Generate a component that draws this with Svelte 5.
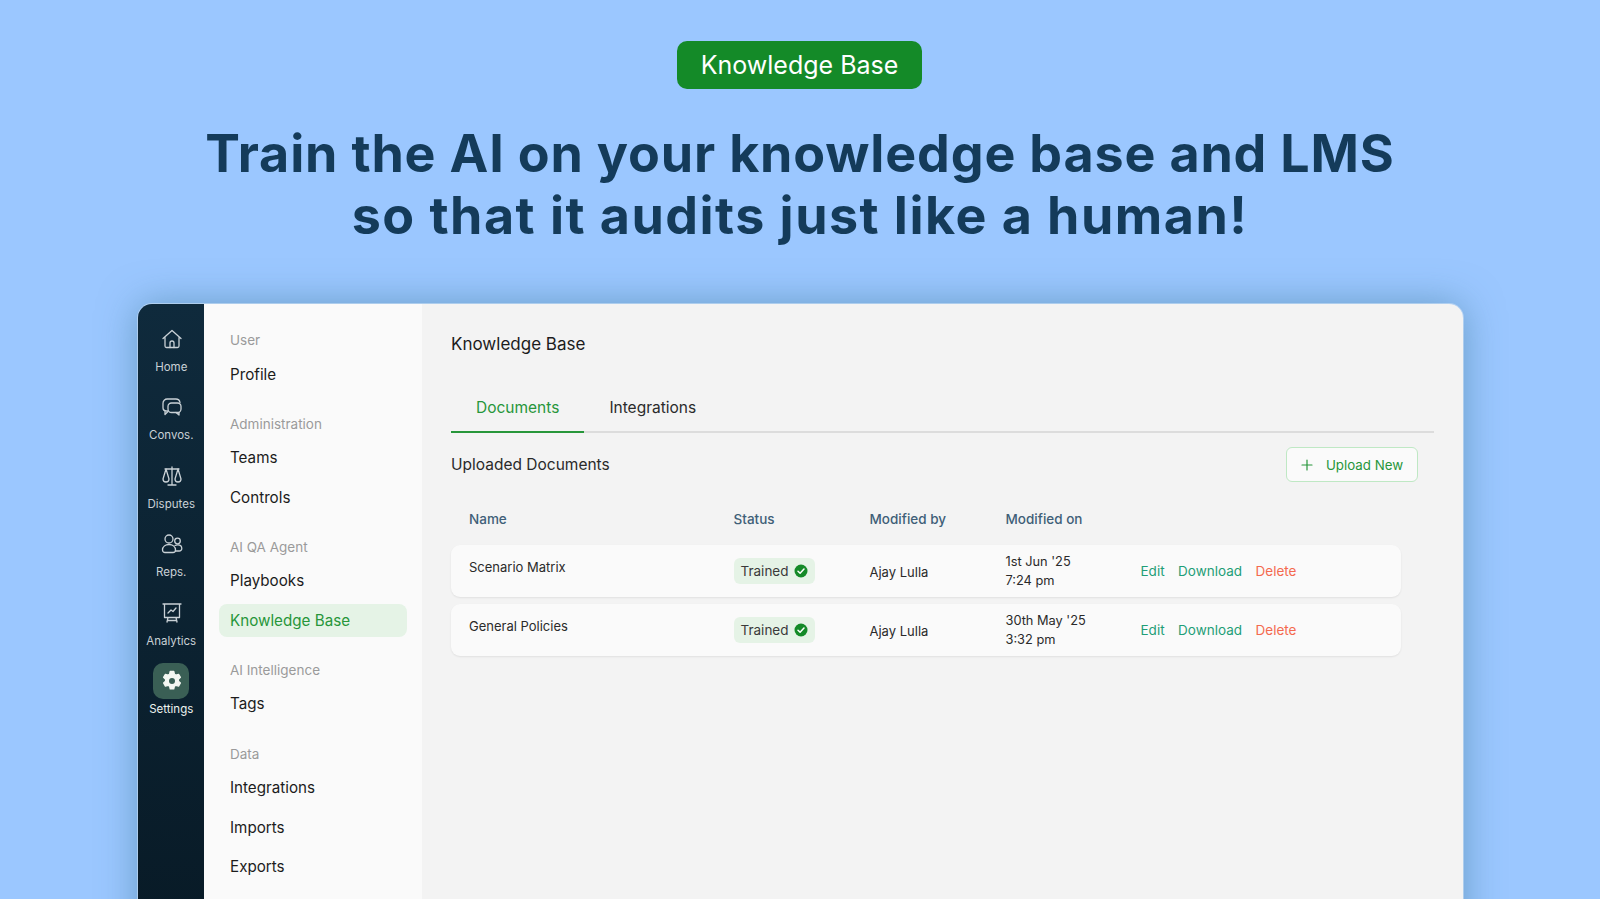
<script>
  const rail = [
    { id: 'home', label: 'Home' },
    { id: 'convos', label: 'Convos.' },
    { id: 'disputes', label: 'Disputes' },
    { id: 'reps', label: 'Reps.' },
    { id: 'analytics', label: 'Analytics' },
    { id: 'settings', label: 'Settings', active: true }
  ];
  const groups = [
    { title: 'User', items: ['Profile'] },
    { title: 'Administration', items: ['Teams', 'Controls'] },
    { title: 'AI QA Agent', items: ['Playbooks', 'Knowledge Base'] },
    { title: 'AI Intelligence', items: ['Tags'] },
    { title: 'Data', items: ['Integrations', 'Imports', 'Exports'] }
  ];
  const docs = [
    { name: 'Scenario Matrix', by: 'Ajay Lulla', date: "1st Jun '25", time: '7:24 pm' },
    { name: 'General Policies', by: 'Ajay Lulla', date: "30th May '25", time: '3:32 pm' }
  ];
</script>

<div class="page">
  <div class="badge">Knowledge Base</div>
  <h1><span class="l1">Train the AI on your knowledge base and LMS</span><span class="l2">so that it audits just like a human!</span></h1>

  <div class="window">
    <nav class="rail">
      {#each rail as r}
        <div class="rail-item" class:active={r.active}>
          <div class="tile">
            <svg viewBox="0 0 24 24" fill="none" stroke="currentColor" stroke-width="1.300" stroke-linecap="round" stroke-linejoin="round">
              {#if r.id === 'home'}
                <path d="M3 11.500 12 3.500l9 8M5 10v9a1.500 1.500 0 0 0 1.500 1.500h11A1.500 1.500 0 0 0 19 19v-9" />
                <path d="M10 20.500V16a2 2 0 0 1 4 0v4.500" />
              {:else if r.id === 'convos'}
                <path d="M7.500 16H6.200A3.200 3.200 0 0 1 3 12.800V8.200A4.200 4.200 0 0 1 7.200 4h8.600A4.200 4.200 0 0 1 20 7.500" />
                <path d="M8 11.500A3.500 3.500 0 0 1 11.500 8H17.500A3.500 3.500 0 0 1 21 11.500V14A3.500 3.500 0 0 1 17.500 17.500H11.500A3.500 3.500 0 0 1 8 14Z" />
                <path d="M5 16v3.500l3-3M19 17.500v2.500l-3-2.500" />
              {:else if r.id === 'disputes'}
                <path d="M12 3v18M8 21h8M5 5h14" />
                <path d="M6 5 3 15a3 3 0 0 0 6 0ZM18 5l-3 10a3 3 0 0 0 6 0Z" />
              {:else if r.id === 'reps'}
                <circle cx="9" cy="7" r="4" />
                <circle cx="17.500" cy="9" r="2.800" />
                <path d="M2.500 18c0-3.500 3-5.500 6.500-5.500s6.500 2 6.500 5.500a2.500 2.500 0 0 1-2.500 2.500H5A2.500 2.500 0 0 1 2.500 18Z" />
                <path d="M15 13.500c1-.5 1.800-.7 2.800-.7 2.200 0 4 1.400 4 3.700a2.500 2.500 0 0 1-2.500 2.500h-3.800" />
              {:else if r.id === 'analytics'}
                <path d="M3 3h18M4.500 3v13.500h15V3M8 16.500 7 21M16 16.500l1 4.500M7.500 19.500h9" />
                <path d="m8 12 3-3 2 1.500 3-3.500" />
              {:else}
                <path class="gear" d="M10.200 2.500h3.600l.6 2.700 1.600.9 2.600-.8 1.800 3.100-2 1.900v1.800l2 1.900-1.800 3.100-2.600-.8-1.600.9-.6 2.700h-3.600l-.6-2.700-1.600-.9-2.600.8-1.800-3.100 2-1.900v-1.800l-2-1.900 1.800-3.100 2.600.8 1.600-.9Z" />
                <circle class="hole" cx="12" cy="12" r="3" />
              {/if}
            </svg>
          </div>
          <span>{r.label}</span>
        </div>
      {/each}
    </nav>

    <aside class="subnav">
      {#each groups as g}
        <section>
          <h4>{g.title}</h4>
          {#each g.items as item}
            <div class="link" class:current={item === 'Knowledge Base'}>{item}</div>
          {/each}
        </section>
      {/each}
    </aside>

    <main>
      <h2>Knowledge Base</h2>
      <div class="tabs">
        <div class="tab on">Documents</div>
        <div class="tab">Integrations</div>
      </div>
      <div class="bar">
        <h3>Uploaded Documents</h3>
        <button>
          <svg viewBox="0 0 14 14" width="14" height="14" fill="none" stroke="currentColor" stroke-width="1.200" stroke-linecap="round"><path d="M7 2v10M2 7h10" /></svg>
          Upload New
        </button>
      </div>
      <div class="grid head">
        <div>Name</div><div>Status</div><div>Modified by</div><div>Modified on</div>
      </div>
      {#each docs as d}
        <div class="grid row">
          <div class="name">{d.name}</div>
          <div>
            <span class="pill">Trained
              <svg viewBox="0 0 14 14" width="14" height="14"><circle cx="7" cy="7" r="6.500" fill="#148a28" /><path d="M4 7.200 6.100 9.200 10 5" fill="none" stroke="#fff" stroke-width="1.500" stroke-linecap="round" stroke-linejoin="round" /></svg>
            </span>
          </div>
          <div class="by">{d.by}</div>
          <div class="date">{d.date}<br />{d.time}</div>
          <div class="actions"><span class="g">Edit</span><span class="g">Download</span><span class="r">Delete</span></div>
        </div>
      {/each}
    </main>
  </div>
</div>

<style>
  :global(body) { margin: 0; background: #9bc7ff; }
  .page {
    height: 899px;
    overflow: hidden;
    padding-top: 41px;
    box-sizing: border-box;
    display: flex;
    flex-direction: column;
    align-items: center;
    font-family: Inter, "Noto Sans", sans-serif;
  }
  .badge {
    width: 245px;
    height: 48px;
    margin-right: 1px;
    background: #148a28;
    color: #fff;
    border-radius: 10px;
    font-size: 25px;
    line-height: 48px;
    text-align: center;
  }
  h1 {
    margin: 34px 0 0;
    font-size: 52px;
    line-height: 62px;
    font-weight: 700;
    color: #143b5a;
    text-align: center;
  }
  h1 span { display: block; }
  .l1 { letter-spacing: .83px; }
  .l2 { letter-spacing: 1.47px; }
  .window {
    margin-top: 57px;
    width: 1325px;
    height: 640px;
    flex: none;
    display: flex;
    border-radius: 14px 14px 0 0;
    overflow: hidden;
    box-shadow: 0 0 0 1px rgba(255, 255, 255, .35), 0 0 38px rgba(60, 120, 150, .55);
  }
  .rail {
    width: 66.500px;
    flex: none;
    background: linear-gradient(#0f2a3c, #081a26);
    padding: 17px 0 0 1px;
    box-sizing: border-box;
  }
  .rail-item {
    height: 68.400px;
    display: flex;
    flex-direction: column;
    align-items: center;
    color: #c9d1d6;
    font-size: 11.500px;
  }
  .rail-item .tile {
    width: 36px;
    height: 36px;
    display: flex;
    align-items: center;
    justify-content: center;
    border-radius: 10px;
  }
  .rail-item svg { width: 24px; height: 24px; margin-left: 1px; }
  .rail-item span { margin-top: 2px; line-height: 16px; }
  .rail-item.active { color: #eef3ef; }
  .rail-item.active .tile { background: #3a5f55; }
  .gear { fill: #f4f7f2; stroke: #f4f7f2; }
  .hole { fill: #3a5f55; stroke: none; }

  .subnav {
    width: 218px;
    flex: none;
    background: #fafafa;
    padding: 27px 15px 0;
    box-sizing: border-box;
  }
  .subnav section { margin-bottom: 24.300px; }
  .subnav h4 {
    margin: 0 0 8.500px;
    padding-left: 11px;
    font-size: 13.500px;
    line-height: 18px;
    font-weight: 400;
    color: #9a9a9a;
  }
  .link {
    padding-left: 11px;
    height: 33px;
    margin-bottom: 6.300px;
    font-size: 15.200px;
    line-height: 33px;
    color: #1c1c1c;
  }
  .link.current {
    background: #e5f3e6;
    color: #27963a;
    border-radius: 8px;
  }

  main {
    flex: 1;
    background: #f3f3f3;
    padding: 29px 29px 0 29px;
    min-width: 0;
  }
  h2 {
    margin: 0;
    font-size: 17px;
    line-height: 22px;
    font-weight: 400;
    color: #1c1c1c;
  }
  .tabs {
    display: flex;
    margin-top: 34px;
    border-bottom: 2px solid #dcdcdc;
  }
  .tab {
    padding: 0 25px;
    height: 44px;
    margin-bottom: -2px;
    font-size: 15.500px;
    line-height: 38px;
    color: #2a2a2a;
  }
  .tab.on {
    color: #27963a;
    border-bottom: 2px solid #27963a;
    height: 42px;
  }
  .bar {
    display: flex;
    justify-content: space-between;
    align-items: center;
    height: 35px;
    margin-top: 14px;
    padding-right: 16px;
  }
  h3 {
    margin: 0;
    font-size: 15.500px;
    font-weight: 400;
    color: #2a2a2a;
  }
  button {
    width: 132px;
    height: 35px;
    display: flex;
    align-items: center;
    justify-content: center;
    gap: 12px;
    background: #fafafa;
    border: 1.500px solid #bfe8c4;
    border-radius: 6px;
    color: #27963a;
    font: 400 13.300px Inter, sans-serif;
  }
  .grid {
    display: grid;
    grid-template-columns: 264.500px 136px 136px 135px 1fr;
    padding-left: 18px;
    width: 950px;
    box-sizing: border-box;
    align-items: center;
  }
  .head {
    margin-top: 20px;
    height: 43px;
    padding-bottom: 9px;
    font-size: 13.500px;
    font-weight: 500;
    color: #3f5f78;
  }
  .row {
    height: 52px;
    margin-bottom: 7px;
    background: #fafafa;
    border-radius: 9px;
    box-shadow: 0 1px 2px rgba(0, 0, 0, .08);
    font-size: 13px;
    color: #2a2a2a;
  }
  .name { margin-top: -8px; }
  .pill {
    display: inline-flex;
    align-items: center;
    gap: 5px;
    height: 26px;
    padding: 0 7px;
    background: #e5f3e6;
    border-radius: 6px;
    color: #3a3a3a;
    font-size: 13.500px;
  }
  .by { margin-top: 2px; }
  .date { line-height: 19px; font-size: 12.800px; }
  .actions { display: flex; gap: 13.500px; font-size: 13.500px; }
  .g { color: #1f9e77; }
  .r { color: #f4694f; }
</style>
